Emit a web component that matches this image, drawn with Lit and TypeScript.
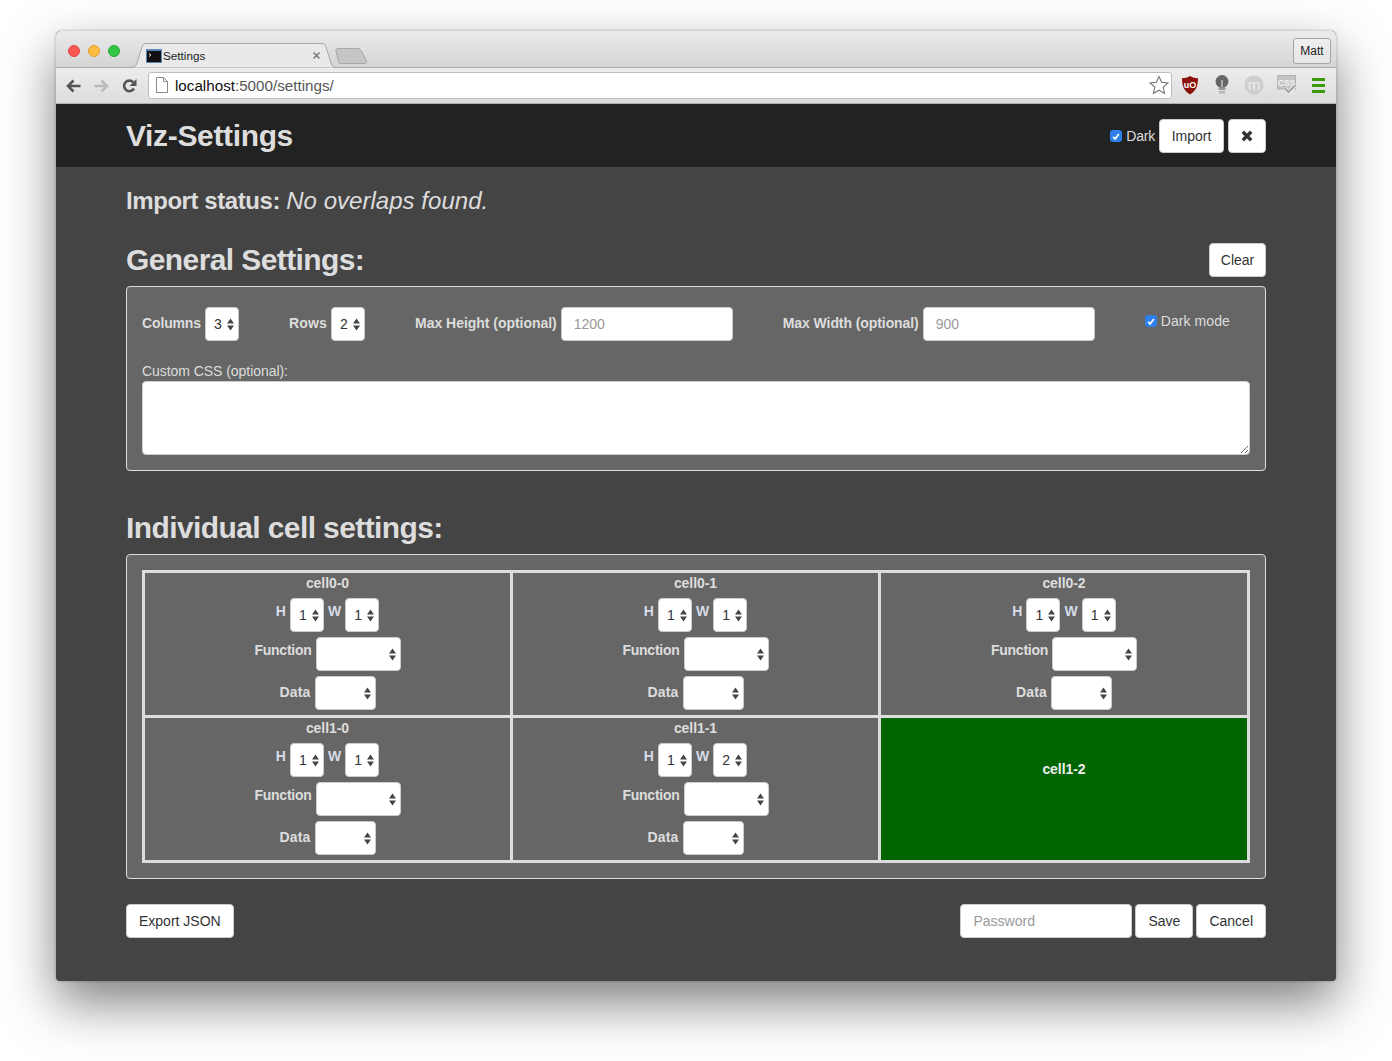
import { LitElement, html, css } from "lit";
import { customElement } from "lit/decorators.js";

const arrows = html`<svg class="arrows" width="7" height="13" viewBox="0 0 7 13"><path d="M3.5 0.5 7 5.500H0zM3.5 12.500 0 7.500h7z" fill="#444"/></svg>`;
const check = html`<span class="check"><svg width="13" height="13" viewBox="0 0 13 13"><path d="M3.4 6.9 5.5 9.2 9.6 3.8" fill="none" stroke="#fff" stroke-width="1.9"/></svg></span>`;

function sel(value: string, cls: string) {
  return html`<div class="select ${cls}"><span class="val">${value}</span>${arrows}</div>`;
}

@customElement("app-root")
export class AppRoot extends LitElement {
  static styles = css`
    :host { display: block; padding: 31px 56px 80px; font-family: "Liberation Sans", Arial, sans-serif; font-size: 14px; color: #ddd; background: #fff; }
    * { box-sizing: border-box; }
    .window { width: 1280px; height: 950px; border-radius: 5px 5px 4px 4px; box-shadow: 0 22px 52px rgba(0,0,0,.5), 0 0 3px rgba(0,0,0,.3); background: #444; display: flex; flex-direction: column; }
    .titlebar { height: 37px; flex: none; position: relative; display: flex; align-items: flex-start; background: linear-gradient(#ebebeb, #d4d4d4); border-radius: 5px 5px 0 0; border-bottom: 1px solid #a8a8a8; padding: 14px 5px 0 12px; }
    .lights { display: flex; gap: 8px; }
    .light { width: 12px; height: 12px; border-radius: 50%; }
    .red { background: #fc5753; border: 1px solid #df4744; }
    .yellow { background: #fdbc40; border: 1px solid #de9f34; }
    .green { background: #33c748; border: 1px solid #27aa35; }
    .tab { position: relative; width: 206px; height: 25px; margin: -2px 0 0 10px; display: flex; align-items: center; padding: 0 0 0 16px; font-size: 11.7px; color: #222; z-index: 1; }
    .tab-bg { position: absolute; left: 0; top: 0; }
    .tab > *:not(.tab-bg) { position: relative; }
    .fav { width: 16px; height: 14px; margin-right: 1px; flex: none; }
    .tab-x { position: absolute !important; left: 182px; top: 8px; width: 9px; height: 9px; }
    .newtab { margin: 3px 0 0 -1px; flex: none; }
    .user { margin-left: auto; margin-top: -7px; width: 38px; height: 26px; border: 1px solid #a5a5a5; border-radius: 3px; font-size: 12px; color: #222; display: flex; align-items: center; justify-content: center; background: linear-gradient(#efefef, #e6e6e6); }
    .toolbar { height: 36px; flex: none; display: flex; align-items: center; background: linear-gradient(#ededed, #dcdcdc); padding: 0 0 0 10px; border-bottom: 1px solid #b0b0b0; }
    .tool { width: 15px; height: 14px; margin-right: 13px; flex: none; }
    .omni { width: 1024px; height: 27px; margin: -1px 0 0 -2px; flex: none; background: #fff; border: 1px solid #bdbdbd; border-radius: 3px; display: flex; align-items: center; padding: 1px 2px 0 7px; font-size: 15.2px; color: #555; }
    .omni b { font-weight: 400; color: #111; }
    .page-ico { margin: -1px 7px 0 0; flex: none; }
    .star { margin: -1px 0 0 auto; flex: none; }
    .exts { position: relative; flex: 1; height: 24px; }
    .ext { position: absolute; top: 1px; }
    .uo { left: 9px; }
    .bulb { left: 43px; }
    .em { left: 72px; }
    .cssv { left: 105px; }
    .menu { left: 140px; top: 4px; }
    .nav { height: 63px; flex: none; background: #222; padding: 0 70px; display: flex; align-items: center; }
    .brand { font-size: 30px; font-weight: 700; color: #ddd; letter-spacing: -0.35px; }
    .nav-right { margin-left: auto; display: flex; align-items: center; }
    .dark { display: flex; align-items: center; gap: 4px; margin-right: 4px; color: #ddd; letter-spacing: -0.2px; }
    .dark .check { margin-top: 1px; }
    .check { width: 12px; height: 12px; border-radius: 3px; background: #2f80ed; display: inline-flex; align-items: center; justify-content: center; flex: none; }
    .check svg { display: block; }
    .btn { height: 34px; padding: 0 12px; background: #fff; border: 1px solid #ccc; border-radius: 4px; display: inline-flex; align-items: center; justify-content: center; color: #333; flex: none; font-family: inherit; font-size: 14px; }
    .import { width: 65px; margin-right: 4px; }
    .close { width: 38px; padding: 0; }
    .clear { width: 57px; padding: 0; }
    main { padding: 21px 70px 0; flex: 1; }
    h3 { margin: 0; font-size: 24px; line-height: 26px; font-weight: 700; color: #ddd; letter-spacing: -0.43px; }
    h3 em { font-weight: 400; font-style: italic; letter-spacing: 0.03px; }
    h2 { margin: 0; font-size: 30px; line-height: 33px; font-weight: 700; color: #ddd; letter-spacing: -0.6px; }
    .general { display: flex; justify-content: space-between; align-items: center; margin-top: 29px; height: 34px; margin-bottom: 9px; }
    .general h2 { margin-bottom: 2px; }
    .panel { background: #666; border: 1px solid #ddd; border-radius: 4px; padding: 20px 15px 15px; }
    .row { display: flex; gap: 50px; align-items: flex-start; }
    .group { display: flex; align-items: center; gap: 4px; }
    .lbl { font-weight: 700; color: #ddd; }
    .group .lbl { margin-bottom: 2px; }
    .group .col-lab { letter-spacing: -0.14px; }
    .group .row-lab { letter-spacing: 0.2px; }
    .group .mh-lab { letter-spacing: -0.03px; }
    .group .mw-lab { letter-spacing: -0.08px; }
    .select { height: 34px; background: #fff; border: 1px solid #ccc; border-radius: 4px; display: flex; align-items: center; padding: 0 4px 0 8px; color: #333; flex: none; }
    .val { flex: 1; }
    .arrows { flex: none; display: block; }
    .s34 { width: 34px; }
    .s85 { width: 85px; }
    .s61 { width: 61px; }
    input { width: 172px; height: 34px; background: #fff; border: 1px solid #ccc; border-radius: 4px; padding: 0 12px; font-family: inherit; font-size: 14px; color: #333; outline: none; }
    input::placeholder { color: #999; opacity: 1; }
    .darkmode { display: flex; align-items: center; gap: 4px; height: 28px; font-weight: 400; letter-spacing: 0.08px; }
    .css-label { display: block; margin-top: 20px; height: 20px; line-height: 20px; color: #ddd; letter-spacing: -0.05px; }
    textarea { display: block; width: 100%; height: 74px; background: #fff; border: 1px solid #ccc; border-radius: 4px; resize: both; outline: none; }
    .individual { margin-top: 40px; margin-bottom: 10px; }
    .panel.cells { padding: 15px; }
    .grid { display: grid; grid-template-columns: 365px 365px 1fr; grid-auto-rows: 142px; gap: 3px; padding: 3px; background: #ddd; }
    .cell { background: #666; display: flex; flex-direction: column; align-items: center; gap: 5px; }
    .cell-title { line-height: 20px; height: 20px; font-weight: 700; color: #ddd; letter-spacing: -0.05px; }
    .cell-row { display: flex; align-items: center; gap: 4px; }
    .up8 { margin-bottom: 8px; }
    .up2 { margin-bottom: 2px; }
    .h-lab { color: #d6dbe8; margin-bottom: 8px; }
    .w-lab { color: #d6dbe8; margin-bottom: 9px; }
    .fn-lab { letter-spacing: -0.25px; }
    .data-lab { letter-spacing: 0.2px; }
    .cell.filled { background: #006400; padding-top: 41px; }
    .cell.filled .cell-title { color: #eee; }
    .footer { display: flex; align-items: center; margin-top: 25px; gap: 3px; }
    .footer .push { margin-right: auto; }
  `;

  cell(name: string, w: string) {
    return html`<div class="cell">
      <div class="cell-title">${name}</div>
      <div class="cell-row"><span class="lbl h-lab">H</span>${sel("1", "s34")}<span class="lbl w-lab">W</span>${sel(w, "s34")}</div>
      <div class="cell-row"><span class="lbl fn-lab up8">Function</span>${sel("", "s85")}</div>
      <div class="cell-row"><span class="lbl data-lab up2">Data</span>${sel("", "s61")}</div>
    </div>`;
  }

  render() {
    return html`<div class="window">
      <div class="titlebar">
        <div class="lights"><span class="light red"></span><span class="light yellow"></span><span class="light green"></span></div>
        <div class="tab">
          <svg class="tab-bg" width="206" height="25" viewBox="0 0 206 25"><path d="M0 24.5C5 24.5 6 23 7 20L12 4C13 1 14 .5 17 .5H191C194 .5 195 1 196 4L201 20C202 23 203 24.5 206 24.5" fill="#e9e9e9" stroke="#a6a6a6"/></svg>
          <svg class="fav" viewBox="0 0 16 14"><rect width="16" height="14" fill="#5b86b8"/><rect x="1" y="2" width="14" height="11" fill="#111"/><path d="M3 4.500 5 6 3 7.500" fill="none" stroke="#ddd" stroke-width="1"/></svg>
          <span>Settings</span>
          <svg class="tab-x" viewBox="0 0 9 9"><path d="M1.500 1.500l6 6M7.500 1.500l-6 6" stroke="#777" stroke-width="1.500"/></svg>
        </div>
        <svg class="newtab" width="33" height="16" viewBox="0 0 33 16"><path d="M1 3C.6 1.500 1.500 .5 3 .5H23C24.500 .5 25.300 1 26 2.500L31.500 13C32 14.500 31 15.500 30 15.500H6C4.500 15.500 4 15 3.500 13.500Z" fill="#c6c6c6" stroke="#a8a8a8"/></svg>
        <div class="user">Matt</div>
      </div>
      <div class="toolbar">
        <svg class="tool" viewBox="0 0 15 14"><path d="M14.500 7H3M7.500 1.500 2 7l5.500 5.500" fill="none" stroke="#555" stroke-width="2.600"/></svg>
        <svg class="tool" viewBox="0 0 15 14"><path d="M.5 7H12M7.500 1.500 13 7l-5.500 5.500" fill="none" stroke="#bbb" stroke-width="2.600"/></svg>
        <svg class="tool" viewBox="0 0 15 14"><path d="M12 9.500A5.300 5.300 0 1 1 11.300 3.300" fill="none" stroke="#555" stroke-width="2.600"/><path d="M14.500 0v7h-7z" fill="#555"/></svg>
        <div class="omni">
          <svg class="page-ico" width="12" height="16" viewBox="0 0 12 16"><path d="M.5.5H7.500L11.500 4.500V15.500H.5zM7.500.5V4.500H11.500" fill="#fff" stroke="#8a8a8a"/></svg>
          <span><b>localhost</b>:5000/settings/</span>
          <svg class="star" width="20" height="20" viewBox="0 0 20 20"><path d="M10 1.500 12.600 7.300 18.900 8 14.200 12.200 15.500 18.400 10 15.200 4.500 18.400 5.800 12.200 1.100 8 7.400 7.300z" fill="#fff" stroke="#777" stroke-width="1.100"/></svg>
        </div>
        <div class="exts">
          <svg class="ext uo" width="18" height="20" viewBox="0 0 18 20"><path d="M9 1C11.500 2.500 14 3.200 17 3.300 17 11 15 16 9 19.500 3 16 1 11 1 3.300 4 3.200 6.500 2.500 9 1Z" fill="#8b0f0a"/><text x="9" y="12.500" text-anchor="middle" font-family="Liberation Sans" font-weight="700" font-size="9" fill="#fff">uO</text></svg>
          <svg class="ext bulb" width="14" height="20" viewBox="0 0 14 20"><circle cx="7" cy="6.500" r="6.500" fill="#666"/><path d="M7 5v7" stroke="#ddd" stroke-width="1.200"/><rect x="3.500" y="12.500" width="7" height="2.500" fill="#999"/><rect x="4" y="16" width="6" height="2.500" fill="#b4b4b4"/></svg>
          <svg class="ext em" width="20" height="20" viewBox="0 0 20 20"><circle cx="10" cy="10" r="9.500" fill="#cecece"/><text x="10" y="14.500" text-anchor="middle" font-family="Liberation Sans" font-size="15" fill="#eee">m</text></svg>
          <svg class="ext cssv" width="20" height="19" viewBox="0 0 20 19"><rect x=".5" y=".5" width="18" height="13.500" fill="#c4c4c4" stroke="#b4b4b4"/><text x="9.500" y="11" text-anchor="middle" font-family="Liberation Sans" font-weight="700" font-size="8.500" fill="#f4f4f4">CSS</text><path d="M8 13.500l3.500 3.500 6.500-6.500" fill="none" stroke="#eee" stroke-width="4"/><path d="M8 13.500l3.500 3.500 6.500-6.500" fill="none" stroke="#a4a4a4" stroke-width="2.200"/></svg>
          <svg class="ext menu" width="13" height="15" viewBox="0 0 13 15"><path d="M0 1.500H13M0 7.500H13M0 13.500H13" stroke="#3f9a0b" stroke-width="3"/></svg>
        </div>
      </div>
      <div class="nav">
        <div class="brand">Viz-Settings</div>
        <div class="nav-right">
          <label class="dark">${check}Dark</label>
          <button class="btn import">Import</button>
          <button class="btn close"><svg width="12" height="12" viewBox="0 0 12 12"><path d="M1.800 1.800l8.400 8.400M10.200 1.800l-8.400 8.400" stroke="#333" stroke-width="3.400"/></svg></button>
        </div>
      </div>
      <main>
        <h3>Import status: <em>No overlaps found.</em></h3>
        <div class="general"><h2>General Settings:</h2><button class="btn clear">Clear</button></div>
        <div class="panel">
          <div class="row">
            <div class="group"><span class="lbl col-lab">Columns</span>${sel("3", "s34")}</div>
            <div class="group"><span class="lbl row-lab">Rows</span>${sel("2", "s34")}</div>
            <div class="group"><span class="lbl mh-lab">Max Height (optional)</span><input placeholder="1200" /></div>
            <div class="group"><span class="lbl mw-lab">Max Width (optional)</span><input placeholder="900" /></div>
            <label class="darkmode">${check}Dark mode</label>
          </div>
          <label class="css-label">Custom CSS (optional):</label>
          <textarea></textarea>
        </div>
        <h2 class="individual">Individual cell settings:</h2>
        <div class="panel cells">
          <div class="grid">
            ${this.cell("cell0-0", "1")}${this.cell("cell0-1", "1")}${this.cell("cell0-2", "1")}
            ${this.cell("cell1-0", "1")}${this.cell("cell1-1", "2")}
            <div class="cell filled"><div class="cell-title">cell1-2</div></div>
          </div>
        </div>
        <div class="footer">
          <button class="btn push">Export JSON</button>
          <input type="password" placeholder="Password" />
          <button class="btn">Save</button>
          <button class="btn">Cancel</button>
        </div>
      </main>
    </div>`;
  }
}
